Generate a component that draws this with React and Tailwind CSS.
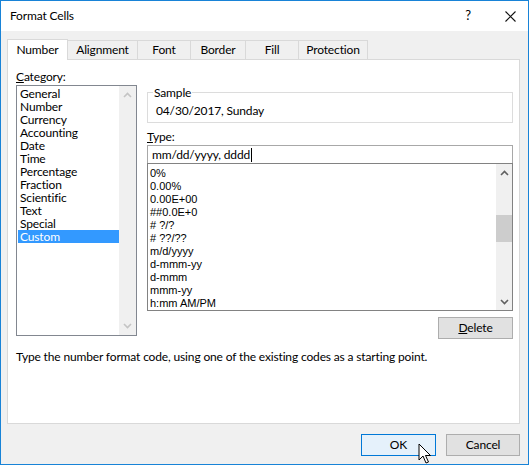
import React from "react";

const UI = { fontFamily: 'Lato, "Noto Sans", sans-serif' };
const MS = { fontFamily: '"Liberation Sans", Arial, sans-serif' };

const categories = ["General","Number","Currency","Accounting","Date","Time","Percentage","Fraction","Scientific","Text","Special","Custom"];
const formats = ["0%","0.00%","0.00E+00","##0.0E+0","# ?/?","# ??/??","m/d/yyyy","d-mmm-yy","d-mmm","mmm-yy","h:mm AM/PM"];
const tabs = [
  { name: "Number", w: "w-[61px]" },
  { name: "Alignment", w: "w-[71px]" },
  { name: "Font", w: "w-[54px]" },
  { name: "Border", w: "w-[56px]" },
  { name: "Fill", w: "w-[54px]" },
  { name: "Protection", w: "w-[70px]" },
];

function Chevron({ up, color }) {
  return (
    <svg width="9" height="6" viewBox="0 0 9 6">
      <path d={up ? "M1 5 L4.5 1.5 L8 5" : "M1 1 L4.5 4.5 L8 1"} fill="none" stroke={color} strokeWidth="1.6" />
    </svg>
  );
}

export default function App() {
  return (
    <div className="w-[529px] h-[465px] bg-[#f0f0f0] border border-[#1883d7] flex flex-col text-[12px] tracking-[-0.15px] text-black relative" style={UI}>
      {/* title bar */}
      <div className="h-[30px] bg-white flex items-center pl-[9px] pr-[12px]">
        <span className="text-[12px]">Format Cells</span>
        <span className="ml-auto mr-[34px] text-[13px]">?</span>
        <svg width="11" height="11" viewBox="0 0 11 11">
          <path d="M0.5 0.5 L10.5 10.5 M10.5 0.5 L0.5 10.5" stroke="#111" strokeWidth="1.1" />
        </svg>
      </div>

      <div className="flex flex-col pl-[6px] pr-[8px] pt-[8px]">
        {/* tabs */}
        <div className="flex items-end h-[20px] relative z-10">
          {tabs.map((t, i) =>
            i === 0 ? (
              <div key={t.name} className={`${t.w} h-[21px] -mb-px bg-white border border-b-0 border-[#d9d9d9] flex items-center justify-center`}>
                {t.name}
              </div>
            ) : (
              <div key={t.name} className={`${t.w} -ml-px h-[19px] border border-b-0 border-[#d9d9d9] flex items-center justify-center`}>
                {t.name}
              </div>
            )
          )}
        </div>

        {/* panel */}
        <div className="h-[365px] bg-white border border-[#d9d9d9] flex flex-col pl-[8px]">
          <div className="flex items-start">
            {/* left column */}
            <div className="w-[121px] pt-[9px] flex flex-col">
              <div className="h-[16px] leading-[16px]"><span className="underline">C</span>ategory:</div>
              <div className="h-[251px] border border-[#828790] flex">
                <div className="flex-1 pt-[1px] pl-[1px] flex flex-col">
                  {categories.map((c) => (
                    <div key={c} className={`h-[13px] leading-[13px] pl-[2px] ${c === "Custom" ? "bg-[#3399ff] text-white" : ""}`}>{c}</div>
                  ))}
                </div>
                <div className="w-[17px] bg-[#f0f0f0] flex flex-col items-center justify-between py-[6px]">
                  <Chevron up color="#c4c4c4" />
                  <Chevron color="#c4c4c4" />
                </div>
              </div>
            </div>

            {/* right column */}
            <div className="w-[366px] ml-[10px] pt-[25px] flex flex-col">
              <fieldset className="border border-[#dcdcdc] h-[38px] m-0 p-0">
                <legend className="ml-[5px] px-[1px] leading-[15px]">Sample</legend>
                <div className="pl-[8px] leading-[15px] mt-[3px]">04/30/2017, Sunday</div>
              </fieldset>
              <div className="mt-[6px] h-[16px] leading-[15px]"><span className="underline">T</span>ype:</div>
              <div className="h-[18px] border border-b-0 border-[#a8a8a8] flex items-center pl-[4px]">
                <span>mm/dd/yyyy, dddd</span>
                <span className="inline-block w-px h-[14px] bg-black ml-[1px]" />
              </div>
              <div className="h-[148px] border border-[#828282] flex">
                <div className="flex-1 pt-[3px] pl-[2px] flex flex-col text-[11px] tracking-normal" style={MS}>
                  {formats.map((f) => (
                    <div key={f} className="h-[13px] leading-[13px]">{f}</div>
                  ))}
                </div>
                <div className="w-[16px] bg-[#f0f0f0] flex flex-col items-center">
                  <div className="h-[17px] flex items-center justify-center"><Chevron up color="#606060" /></div>
                  <div className="mt-[34px] w-full h-[27px] bg-[#cdcdcd]" />
                  <div className="mt-auto h-[17px] flex items-center justify-center"><Chevron color="#606060" /></div>
                </div>
              </div>
              <div className="flex justify-end mt-[6px]">
                <button className="w-[75px] h-[22px] bg-[#e1e1e1] border border-[#adadad] flex items-center justify-center">
                  <span><span className="underline">D</span>elete</span>
                </button>
              </div>
            </div>
          </div>
          <div className="mt-[10px] leading-[15px]">Type the number format code, using one of the existing codes as a starting point.</div>
        </div>

        {/* buttons */}
        <div className="flex justify-end gap-[10px] mt-[10px] pr-[0px]">
          <button className="w-[75px] h-[22px] bg-[#e5f1fb] border border-[#0078d7] flex items-center justify-center">OK</button>
          <button className="w-[74px] h-[22px] bg-[#e1e1e1] border border-[#adadad] flex items-center justify-center">Cancel</button>
        </div>
      </div>

      {/* mouse cursor */}
      <svg className="absolute left-[417px] top-[442px]" width="14" height="22" viewBox="0 0 14 22">
        <path d="M1 1 L1 17 L5 13 L8 20 L10.5 19 L7.5 12.5 L12.5 12.5 Z" fill="#fff" stroke="#000" strokeWidth="1" strokeLinejoin="round" />
      </svg>
    </div>
  );
}
